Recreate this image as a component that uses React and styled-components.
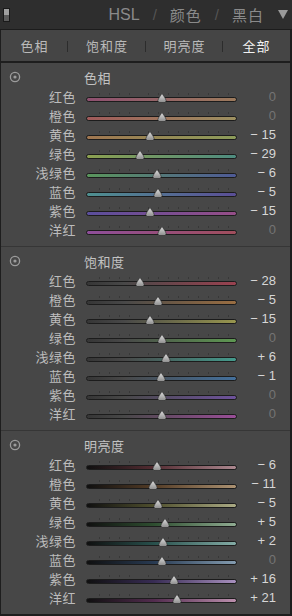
import React from 'react';
import styled, { createGlobalStyle } from 'styled-components';

const GlobalStyle = createGlobalStyle`
  html, body {
    margin: 0;
    padding: 0;
    background: #2e2e2e;
  }
  body {
    font-family: "Noto Sans CJK SC", "Liberation Sans", sans-serif;
  }
`;

const Panel = styled.div`
  width: 292px;
  height: 616px;
  display: flex;
  flex-direction: column;
  background: #2e2e2e;
  overflow: hidden;
`;

const Header = styled.div`
  flex-shrink: 0;
  height: 29px;
  display: flex;
  align-items: center;
  padding: 0 4px 0 3px;
  border-bottom: 1px solid #1c1c1c;
`;

const Grip = styled.div`
  width: 5px;
  height: 12px;
  border: 1px solid #1a1a1a;
  background: linear-gradient(#a0a0a0 0 50%, #5c5c5c 50% 100%);
`;

const Modes = styled.div`
  margin-left: auto;
  display: flex;
  align-items: center;
  gap: 13px;
  color: #8a8a8a;
  font-size: 15px;
`;

const ModeText = styled.span`
  font-family: ${(p) => (p.$latin ? '"Liberation Sans", sans-serif' : '"Noto Sans CJK SC", sans-serif')};
  font-size: ${(p) => (p.$latin ? '16px' : '15px')};
  letter-spacing: ${(p) => (p.$latin ? '0' : '1px')};
`;

const Slash = styled.span`
  color: #555;
  font-family: "Liberation Sans", sans-serif;
  font-size: 15px;
`;

const Caret = styled.span`
  width: 0;
  height: 0;
  margin-left: 14px;
  border-left: 5px solid transparent;
  border-right: 5px solid transparent;
  border-top: 9px solid #9a9a9a;
`;

const Tabs = styled.div`
  flex-shrink: 0;
  height: 31px;
  display: grid;
  grid-template-columns: 67px 78px 77px 1fr;
  align-items: center;
  background: #454545;
  border-left: 1px solid #1e1e1e;
  border-right: 2px solid #1e1e1e;
  border-bottom: 2px solid #1e1e1e;
`;

const Tab = styled.div`
  position: relative;
  text-align: center;
  font-size: 13px;
  letter-spacing: 1px;
  color: ${(p) => (p.$active ? '#f2f2f2' : '#bababa')};

  &::after {
    content: '';
    display: ${(p) => (p.$last ? 'none' : 'block')};
    position: absolute;
    right: 0;
    top: 50%;
    width: 1px;
    height: 11px;
    margin-top: -5px;
    background: #2c2c2c;
  }
`;

const Body = styled.div`
  flex: 1;
  background: #474747;
  border-left: 1px solid #1e1e1e;
  border-right: 2px solid #1e1e1e;
  border-bottom: 2px solid #1e1e1e;
`;

const Section = styled.div`
  padding: 4px 0 7px;
  border-top: ${(p) => (p.$first ? 'none' : '1px solid #363636')};
`;

const TitleRow = styled.div`
  height: 20px;
  display: grid;
  grid-template-columns: 75px 1fr;
  column-gap: 8px;
  align-items: center;
`;

const Target = styled.svg`
  margin-left: 8px;
  display: block;
`;

const Title = styled.div`
  font-size: 13px;
  color: #c2c2c2;
  letter-spacing: 0.5px;
`;

const Row = styled.div`
  height: 19px;
  display: grid;
  grid-template-columns: 75px 151px 1fr;
  column-gap: 10px;
  align-items: center;
`;

const Label = styled.div`
  text-align: right;
  font-size: 13px;
  color: #bcbcbc;
  letter-spacing: 0.5px;
`;

const Slider = styled.div`
  position: relative;
  height: 19px;
  display: flex;
  flex-direction: column;
  justify-content: center;
  padding-top: 2px;
  box-sizing: border-box;
`;

const Ticks = styled.div`
  height: 2px;
  margin: 0 4px 2px;
  background: repeating-linear-gradient(
    to right,
    transparent 0 8.9px,
    #383838 8.9px 9.9px
  );
`;

const Track = styled.div`
  height: 3px;
  border: 1px solid #1c1c1c;
  border-radius: 3px;
  background: ${(p) => p.$fill};
`;

const Thumb = styled.svg`
  position: absolute;
  bottom: 3px;
  transform: translateX(-50%);
`;

const Value = styled.div`
  text-align: right;
  padding-right: 14px;
  font-family: "Liberation Sans", sans-serif;
  font-size: 13px;
  color: ${(p) => (p.$zero ? '#747474' : '#d6d6d6')};
  white-space: pre;
`;

const NAMES = ['红色', '橙色', '黄色', '绿色', '浅绿色', '蓝色', '紫色', '洋红'];

const HUE = [
  ['#8e5070', '#9c7a5c'],
  ['#a05a5a', '#9c9060'],
  ['#a07650', '#8c9c5a'],
  ['#8ca050', '#4e8c80'],
  ['#5a965c', '#4e5a96'],
  ['#4e9090', '#5a4e96'],
  ['#5a4e9c', '#964e88'],
  ['#8e4e9a', '#a04e5c'],
];

const TINT = [
  '#9a4250',
  '#9a6e42',
  '#98964e',
  '#5e9852',
  '#449a8c',
  '#44709c',
  '#6e529c',
  '#9a4e98',
];

const LIGHT = [
  '#ac8890',
  '#ac9272',
  '#aaaa84',
  '#90ac92',
  '#84aca6',
  '#849cb0',
  '#a890be',
  '#bc90ae',
];

const DARKMID = [
  '#542c32',
  '#543c26',
  '#50502e',
  '#2e4e30',
  '#28504c',
  '#283a52',
  '#382c54',
  '#522c4e',
];

const sections = [
  {
    title: '色相',
    values: [0, 0, -15, -29, -6, -5, -15, 0],
    fill: (i) => `linear-gradient(to right, ${HUE[i][0]}, ${HUE[i][1]})`,
  },
  {
    title: '饱和度',
    values: [-28, -5, -15, 0, 6, -1, 0, 0],
    fill: (i) => `linear-gradient(to right, #363636, #484848 25%, ${TINT[i]})`,
  },
  {
    title: '明亮度',
    values: [-6, -11, -5, 5, 2, 0, 16, 21],
    fill: (i) =>
      `linear-gradient(to right, #101010, ${DARKMID[i]} 45%, ${LIGHT[i]})`,
  },
];

const formatValue = (v) => {
  if (v === 0) return '0';
  return v < 0 ? `\u2212 ${-v}` : `+ ${v}`;
};

const TargetIcon = () => (
  <Target width="12" height="12" viewBox="0 0 12 12">
    <circle cx="6" cy="6" r="4.6" fill="none" stroke="#9c9c9c" strokeWidth="1.3" />
    <circle cx="6" cy="6" r="1.6" fill="#9c9c9c" />
  </Target>
);

const ThumbIcon = ({ pct }) => (
  <Thumb width="11" height="10" viewBox="0 0 11 10" style={{ left: `${pct}%` }}>
    <defs>
      <linearGradient id="thumbFill" x1="0" y1="0" x2="0" y2="1">
        <stop offset="0" stopColor="#e0e0e0" />
        <stop offset="1" stopColor="#8c8c8c" />
      </linearGradient>
    </defs>
    <path
      d="M5.5 0.5 L8.6 5 Q10.8 8 8.4 9.5 L2.6 9.5 Q0.2 8 2.4 5 Z"
      fill="url(#thumbFill)"
      stroke="#2a2a2a"
      strokeWidth="0.6"
    />
  </Thumb>
);

const SliderRow = ({ name, value, fill }) => (
  <Row>
    <Label>{name}</Label>
    <Slider>
      <Ticks />
      <Track $fill={fill} />
      <ThumbIcon pct={50 + value / 2} />
    </Slider>
    <Value $zero={value === 0}>{formatValue(value)}</Value>
  </Row>
);

const App = () => (
  <Panel>
    <GlobalStyle />
    <Header>
      <Grip />
      <Modes>
        <ModeText $latin>HSL</ModeText>
        <Slash>/</Slash>
        <ModeText>颜色</ModeText>
        <Slash>/</Slash>
        <ModeText>黑白</ModeText>
      </Modes>
      <Caret />
    </Header>
    <Tabs>
      <Tab>色相</Tab>
      <Tab>饱和度</Tab>
      <Tab>明亮度</Tab>
      <Tab $active $last>全部</Tab>
    </Tabs>
    <Body>
      {sections.map((s, si) => (
        <Section key={s.title} $first={si === 0}>
          <TitleRow>
            <TargetIcon />
            <Title>{s.title}</Title>
          </TitleRow>
          {NAMES.map((n, i) => (
            <SliderRow key={n} name={n} value={s.values[i]} fill={s.fill(i)} />
          ))}
        </Section>
      ))}
    </Body>
  </Panel>
);

export default App;
